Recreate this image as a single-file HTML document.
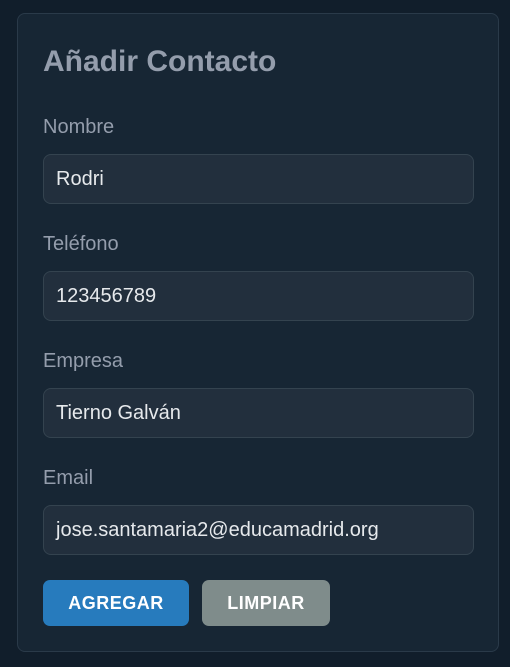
<!DOCTYPE html>
<html><head><style>
body{margin:0;width:510px;height:667px;background:#111e2b;font-family:"Liberation Sans",sans-serif;overflow:hidden;position:relative}
.card{position:absolute;left:17px;top:13px;width:482px;height:639px;background:#172634;border:1px solid #2a3a49;border-radius:8px;box-sizing:border-box}
h1{position:absolute;left:43px;top:45px;margin:0;font-size:30px;font-weight:bold;color:#949dac}
.l{position:absolute;left:43px;font-size:20px;color:#949dac}
.i{position:absolute;left:43px;width:431px;height:50px;box-sizing:border-box;background:#222f3d;border:1px solid #34434f;border-radius:8px;color:#e6e9ec;font-size:20px;line-height:48px;padding-left:12px}
.b{position:absolute;top:580px;height:46px;border-radius:7px;color:#fff;font-weight:bold;font-size:18px;text-align:center;line-height:46px;letter-spacing:.5px}
</style></head><body>
<div class="card"></div>
<h1>Añadir Contacto</h1>
<div class="l" style="top:116px">Nombre</div>
<div class="i" style="top:154px">Rodri</div>
<div class="l" style="top:233px">Teléfono</div>
<div class="i" style="top:271px">123456789</div>
<div class="l" style="top:350px">Empresa</div>
<div class="i" style="top:388px">Tierno Galván</div>
<div class="l" style="top:467px">Email</div>
<div class="i" style="top:505px">jose.santamaria2@educamadrid.org</div>
<div class="b" style="left:43px;width:146px;background:#277bbd">AGREGAR</div>
<div class="b" style="left:202px;width:128px;background:#7f8c8b">LIMPIAR</div>
</body></html>
